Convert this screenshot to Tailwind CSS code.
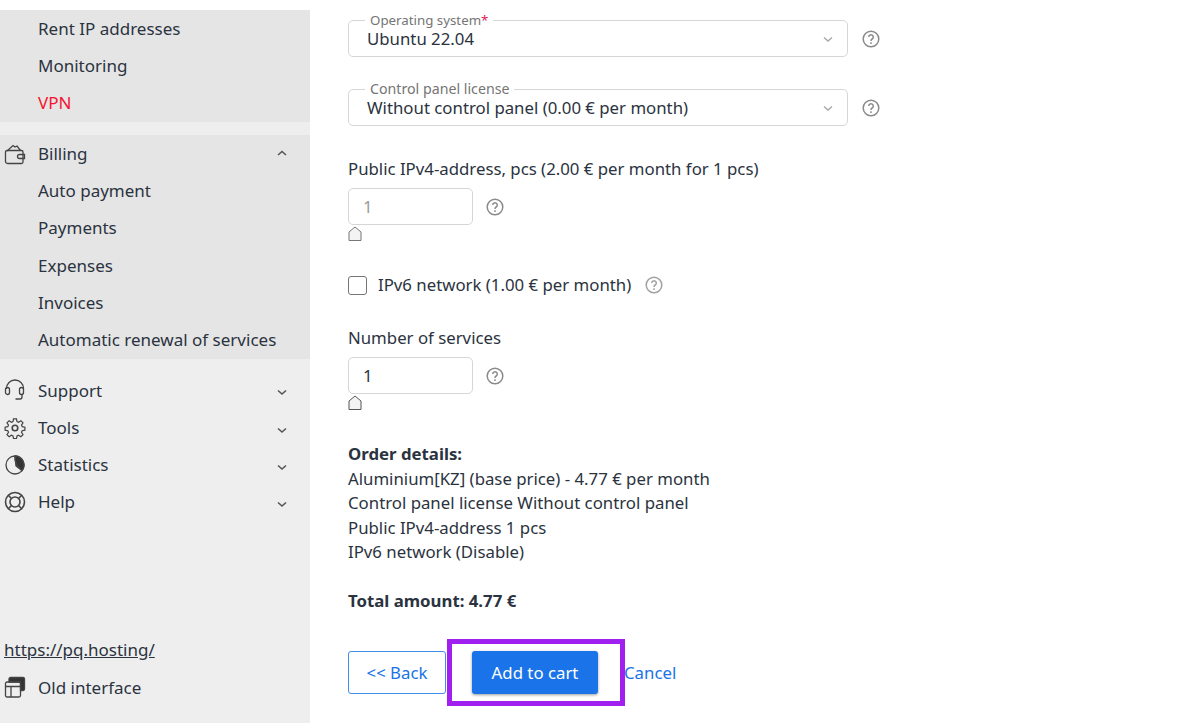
<!DOCTYPE html>
<html lang="en">
<head>
  <meta charset="UTF-8">
  <title>Order</title>
  <script src="https://cdn.jsdelivr.net/npm/@tailwindcss/browser@4"></script>
</head>
<body class="bg-white font-['Noto_Sans',sans-serif] text-[#2b3340]">
  <div class="relative flex h-[723px] w-[1200px] overflow-hidden">
    <!-- sidebar -->
    <aside class="mt-[10px] flex h-[713px] w-[310px] shrink-0 flex-col bg-[#eeeeee] text-[17px]">
      <div class="bg-[#e5e5e5] pl-[38px]">
        <div class="flex h-[37.3px] items-center">Rent IP addresses</div>
        <div class="flex h-[37.3px] items-center">Monitoring</div>
        <div class="flex h-[37.3px] items-center text-[#f5132f]">VPN</div>
      </div>
      <div class="mt-[13px] bg-[#e5e5e5]">
        <div class="flex h-[37.3px] items-center pr-[23px]">
          <span class="flex w-[38px] pl-[4px]">
            <svg class="h-[22px] w-[22px]" viewBox="0 0 22 22" fill="none" stroke="#444" stroke-width="1.3"><path d="M3 8 9 2.500l2 1.500 2-1 3.500 4.500"/><path d="M3 7.500h14.500A1.500 1.500 0 0 1 19 9v10a1.500 1.500 0 0 1-1.500 1.500h-14A2 2 0 0 1 1.500 18.500V9A1.500 1.500 0 0 1 3 7.500Z"/><path d="M20.500 11.500h-5a2 2 0 0 0 0 4h5Z"/></svg>
          </span>
          <span class="flex-1">Billing</span>
          <svg class="h-[10px] w-[10px]" viewBox="0 0 10 10" fill="none" stroke="#555" stroke-width="1.6"><path d="m1 6 4-3.500L9 6"/></svg>
        </div>
        <div class="flex h-[37.3px] items-center pl-[38px]">Auto payment</div>
        <div class="flex h-[37.3px] items-center pl-[38px]">Payments</div>
        <div class="flex h-[37.3px] items-center pl-[38px]">Expenses</div>
        <div class="flex h-[37.3px] items-center pl-[38px]">Invoices</div>
        <div class="flex h-[37.3px] items-center pl-[38px]">Automatic renewal of services</div>
      </div>
      <div class="mt-[13px]">
        <div class="flex h-[37.3px] items-center pr-[23px]">
          <span class="flex w-[38px] pl-[4px]">
            <svg class="h-[22px] w-[22px]" viewBox="0 0 22 22" fill="none" stroke="#444" stroke-width="1.3"><path d="M2.500 10V9.500a8.500 8.500 0 0 1 17 0V10"/><rect x="1.500" y="8.500" width="4" height="7" rx="2"/><rect x="15.500" y="8.500" width="4" height="7" rx="2"/><path d="M18 15.500V18a2 2 0 0 1-2 2h-4.500"/></svg>
          </span>
          <span class="flex-1">Support</span>
          <svg class="mt-[4px] h-[10px] w-[10px]" viewBox="0 0 10 10" fill="none" stroke="#555" stroke-width="1.6"><path d="m1 3.500 4 3.500 4-3.500"/></svg>
        </div>
        <div class="flex h-[37.3px] items-center pr-[23px]">
          <span class="flex w-[38px] pl-[4px]">
            <svg class="h-[22px] w-[22px]" viewBox="0 0 22 22" fill="none" stroke="#444" stroke-width="1.2"><circle cx="11" cy="11" r="2.800" stroke-width="1.6"/><path d="M9.500 1.800h3l.5 2.700 1.600.7 2.300-1.500 2.100 2.100-1.500 2.300.7 1.600 2.700.5v3l-2.700.5-.7 1.600 1.500 2.300-2.100 2.100-2.300-1.500-1.600.7-.5 2.700h-3l-.5-2.700-1.600-.7-2.300 1.500-2.100-2.100 1.500-2.300-.7-1.600-2.700-.5v-3l2.700-.5.7-1.600-1.500-2.300 2.100-2.100 2.300 1.500 1.600-.7Z"/></svg>
          </span>
          <span class="flex-1">Tools</span>
          <svg class="mt-[4px] h-[10px] w-[10px]" viewBox="0 0 10 10" fill="none" stroke="#555" stroke-width="1.6"><path d="m1 3.500 4 3.500 4-3.500"/></svg>
        </div>
        <div class="flex h-[37.3px] items-center pr-[23px]">
          <span class="flex w-[38px] pl-[4px]">
            <svg class="h-[22px] w-[22px]" viewBox="0 0 22 22" fill="none" stroke="#444" stroke-width="1.3"><circle cx="11" cy="11" r="9"/><path d="M11 2a9 9 0 0 1 7 14.600L12 12Z" fill="#333"/><path d="M11 2c-.5 5 .5 8 7 14.600"/></svg>
          </span>
          <span class="flex-1">Statistics</span>
          <svg class="mt-[4px] h-[10px] w-[10px]" viewBox="0 0 10 10" fill="none" stroke="#555" stroke-width="1.6"><path d="m1 3.500 4 3.500 4-3.500"/></svg>
        </div>
        <div class="flex h-[37.3px] items-center pr-[23px]">
          <span class="flex w-[38px] pl-[4px]">
            <svg class="h-[22px] w-[22px]" viewBox="0 0 22 22" fill="none" stroke="#444" stroke-width="1.6"><circle cx="11" cy="11" r="9.500"/><circle cx="11" cy="11" r="5"/><path d="m4.300 4.300 3.200 3.200M17.700 4.300l-3.200 3.200M4.300 17.700l3.200-3.200M17.700 17.700l-3.200-3.200"/></svg>
          </span>
          <span class="flex-1">Help</span>
          <svg class="mt-[4px] h-[10px] w-[10px]" viewBox="0 0 10 10" fill="none" stroke="#555" stroke-width="1.6"><path d="m1 3.500 4 3.500 4-3.500"/></svg>
        </div>
      </div>
      <div class="mt-auto mb-[17px]">
        <a class="flex h-[37.4px] items-center pl-[4px] underline">https://pq.hosting/</a>
        <div class="flex h-[37.4px] items-center">
          <span class="flex w-[38px] pl-[4px]">
            <svg class="h-[22px] w-[22px]" viewBox="0 0 22 22" fill="none" stroke="#444" stroke-width="1.3"><path d="M5 4.500V3a1.500 1.500 0 0 1 1.500-1.500H19A1.500 1.500 0 0 1 20.500 3v10a1.500 1.500 0 0 1-1.500 1.500h-2.500V6H5Z" fill="#333"/><rect x="1.500" y="6" width="15" height="15" rx="1.500"/><path d="M1.500 10.500h15M7 10.500V21"/></svg>
          </span>
          <span>Old interface</span>
        </div>
      </div>
    </aside>

    <!-- order form -->
    <main class="ml-[38px] flex flex-col pt-[20px] text-[16.8px]">
      <div class="flex items-center">
        <div class="relative flex h-[37px] w-[500px] items-center rounded-[5px] border border-[#d6d6d6] pl-[18px] pr-[14px]">
          <span class="absolute left-[16px] top-[-9px] bg-white px-[5px] text-[13.3px] leading-[16px] text-[#757575]">Operating system<span class="text-[#e0195a]">*</span></span>
          <span class="flex-1 pt-[1px]">Ubuntu 22.04</span>
          <svg class="h-[10px] w-[10px]" viewBox="0 0 10 10" fill="none" stroke="#a8a8a8" stroke-width="1.4"><path d="m1 3.500 4 3.500 4-3.500"/></svg>
        </div>
        <svg class="ml-[14px] h-[18px] w-[18px]" viewBox="0 0 18 18" fill="none" stroke="#8a8a8a" stroke-width="1.5"><circle cx="9" cy="9" r="7.800"/><path d="M6.700 7a2.300 2.300 0 1 1 3.500 2c-.8.500-1.200 1-1.200 1.900"/><path d="M9 12.300v1.600"/></svg>
      </div>
      <div class="mt-[32px] flex items-center">
        <div class="relative flex h-[37px] w-[500px] items-center rounded-[5px] border border-[#d6d6d6] pl-[18px] pr-[14px]">
          <span class="absolute left-[16px] top-[-9px] bg-white px-[5px] text-[14.2px] leading-[16px] text-[#757575]">Control panel license</span>
          <span class="flex-1 pt-[1px]">Without control panel (0.00 € per month)</span>
          <svg class="h-[10px] w-[10px]" viewBox="0 0 10 10" fill="none" stroke="#a8a8a8" stroke-width="1.4"><path d="m1 3.500 4 3.500 4-3.500"/></svg>
        </div>
        <svg class="ml-[14px] h-[18px] w-[18px]" viewBox="0 0 18 18" fill="none" stroke="#8a8a8a" stroke-width="1.5"><circle cx="9" cy="9" r="7.800"/><path d="M6.700 7a2.300 2.300 0 1 1 3.500 2c-.8.500-1.200 1-1.200 1.900"/><path d="M9 12.300v1.600"/></svg>
      </div>

      <div class="mt-[31px] leading-[24px]">Public IPv4-address, pcs (2.00 € per month for 1 pcs)</div>
      <div class="mt-[7px] flex items-center">
        <div class="flex h-[37px] w-[125px] items-center rounded-[5px] border border-[#d6d6d6] pl-[14px] text-[#9a9a9a]">1</div>
        <svg class="ml-[13px] h-[18px] w-[18px]" viewBox="0 0 18 18" fill="none" stroke="#8a8a8a" stroke-width="1.5"><circle cx="9" cy="9" r="7.800"/><path d="M6.700 7a2.300 2.300 0 1 1 3.500 2c-.8.500-1.200 1-1.200 1.900"/><path d="M9 12.300v1.600"/></svg>
      </div>
      <svg class="mt-[1px] h-[16px] w-[14px]" viewBox="0 0 14 16" fill="#f3f3f3" stroke="#777" stroke-width="1"><path d="M1 14.500V6l6-5 6 5v8.500Z" stroke-linejoin="round"/></svg>

      <div class="mt-[34px] flex h-[18px] items-center">
        <span class="h-[19px] w-[19px] rounded-[3px] border border-[#767676] bg-white"></span>
        <span class="ml-[11px]">IPv6 network (1.00 € per month)</span>
        <svg class="ml-[14px] h-[18px] w-[18px]" viewBox="0 0 18 18" fill="none" stroke="#a0a0a0" stroke-width="1.5"><circle cx="9" cy="9" r="7.800"/><path d="M6.700 7a2.300 2.300 0 1 1 3.500 2c-.8.500-1.200 1-1.200 1.900"/><path d="M9 12.300v1.600"/></svg>
      </div>

      <div class="mt-[32px] leading-[24px]">Number of services</div>
      <div class="mt-[7px] flex items-center">
        <div class="flex h-[37px] w-[125px] items-center rounded-[5px] border border-[#d6d6d6] pl-[14px]">1</div>
        <svg class="ml-[13px] h-[18px] w-[18px]" viewBox="0 0 18 18" fill="none" stroke="#8a8a8a" stroke-width="1.5"><circle cx="9" cy="9" r="7.800"/><path d="M6.700 7a2.300 2.300 0 1 1 3.500 2c-.8.500-1.200 1-1.200 1.900"/><path d="M9 12.300v1.600"/></svg>
      </div>
      <svg class="mt-[1px] h-[16px] w-[14px]" viewBox="0 0 14 16" fill="#f3f3f3" stroke="#555" stroke-width="1"><path d="M1 14.500V6l6-5 6 5v8.500Z" stroke-linejoin="round"/></svg>

      <div class="mt-[31px] leading-[24.6px]">
        <div class="font-bold">Order details:</div>
        <div>Aluminium[KZ] (base price) - 4.77 € per month</div>
        <div>Control panel license Without control panel</div>
        <div>Public IPv4-address 1 pcs</div>
        <div>IPv6 network (Disable)</div>
      </div>
      <div class="mt-[24px] font-bold leading-[24px]">Total amount: 4.77 €</div>

      <div class="mt-[38px] flex items-center">
        <button class="flex h-[43px] w-[98px] items-center justify-center rounded-[3px] border border-[#3f8cec] text-[#1a73e8]">&lt;&lt; Back</button>
        <button class="ml-[26px] flex h-[43px] w-[126px] items-center justify-center rounded-[3px] bg-[#1a73e8] text-white shadow-[0_1px_3px_rgba(0,0,0,0.4)]">Add to cart</button>
        <a class="ml-[26px] text-[#1a73e8]">Cancel</a>
      </div>
    </main>

    <!-- highlight round the button -->
    <div class="absolute left-[447px] top-[639px] h-[67px] w-[178px] border-[5px] border-[#a020f0]"></div>
  </div>
</body>
</html>
